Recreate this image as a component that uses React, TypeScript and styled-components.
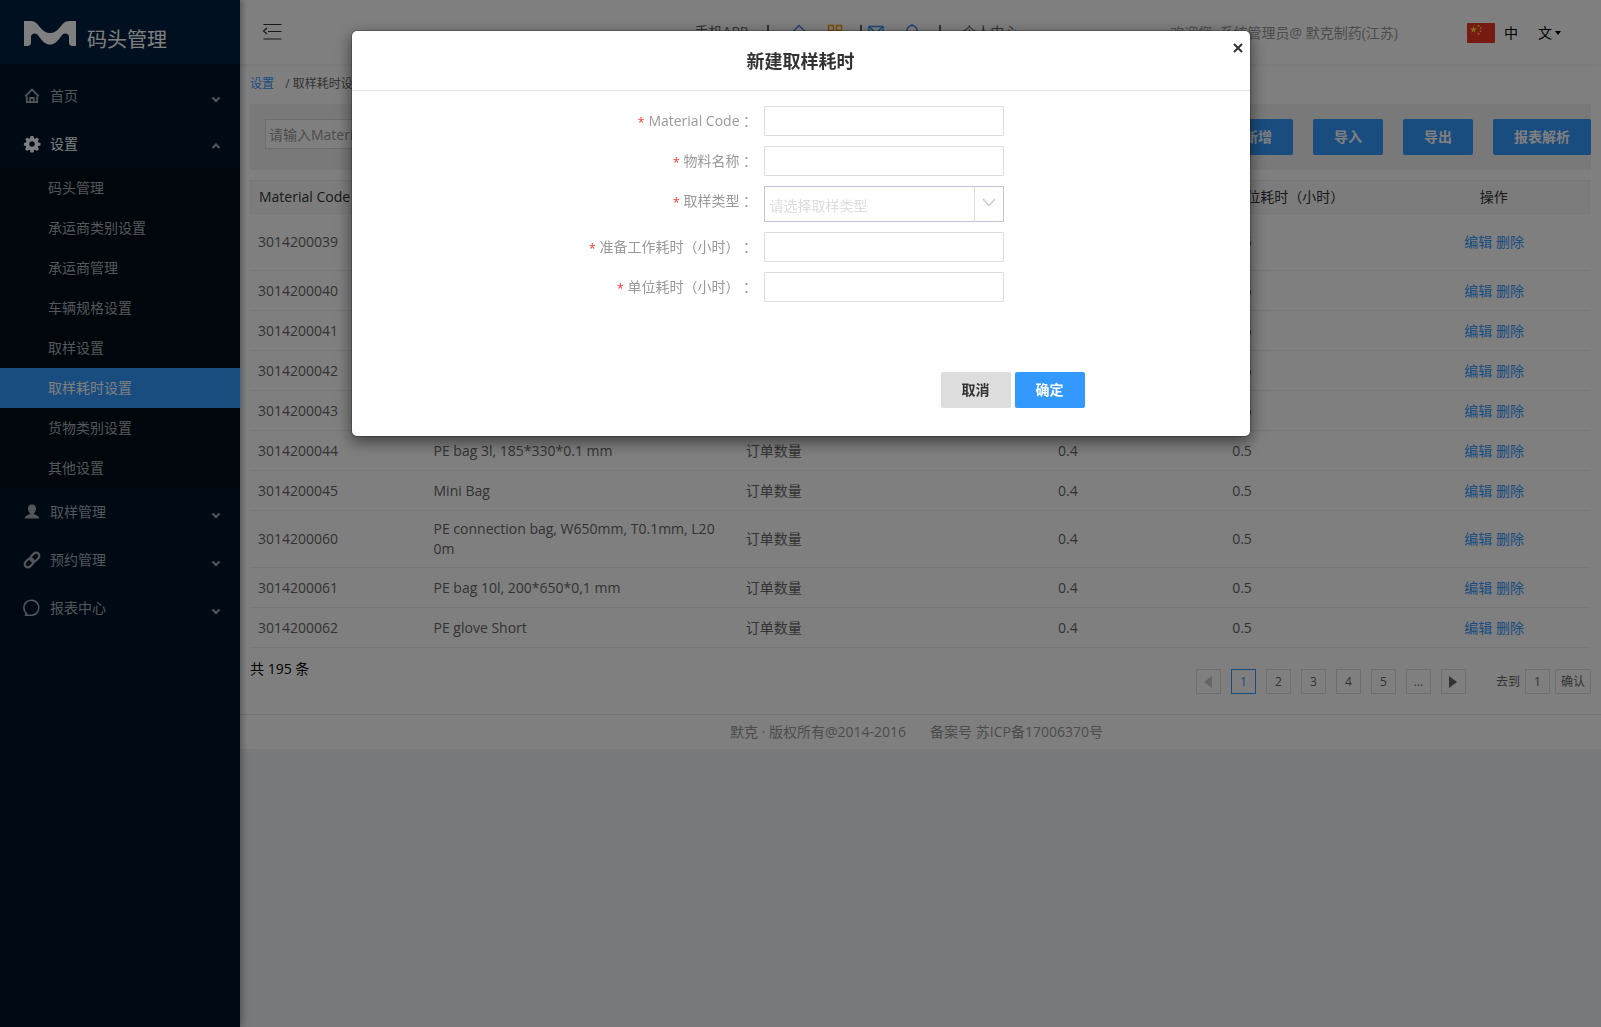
import React from 'react';
import styled, { createGlobalStyle } from 'styled-components';

const GlobalStyle = createGlobalStyle`
  *, *::before, *::after { box-sizing: border-box; }
  body {
    margin: 0;
    background: #f0f2f5;
    color: #333;
    font: 14px/20px "Open Sans", "Noto Sans CJK SC", sans-serif;
    text-spacing-trim: space-all;
  }
  button, input, select { font: inherit; margin: 0; }
  a { text-decoration: none; }
  ul { list-style: none; margin: 0; padding: 0; }
  h1, h2, p { margin: 0; }
`;

const Page = styled.div`
  display: flex;
  min-height: 100vh;
`;

const Sidebar = styled.aside`
  flex: 0 0 240px;
  position: relative;
  z-index: 1;
  background: #001529;
  box-shadow: 2px 0 6px rgba(0, 21, 41, 0.35);
`;

const Brand = styled.div`
  display: flex;
  align-items: center;
  gap: 11px;
  height: 64px;
  padding: 3px 24px 0;
  background: #002140;
  color: #fff;
`;

const BrandName = styled.h1`
  padding-top: 12px;
  font-size: 20px;
  line-height: 28px;
  font-weight: 400;
`;

const MenuRow = styled.button<{ $open?: boolean }>`
  display: flex;
  align-items: center;
  gap: 10px;
  width: 100%;
  height: 48px;
  padding: 0 18px 0 24px;
  border: 0;
  background: none;
  color: ${(p) => (p.$open ? '#fff' : '#a6adb4')};
  text-align: left;
  svg { display: block; }
`;

const MenuLabel = styled.span`
  flex: 1;
`;

const Menu = styled.nav`
  padding-top: 8px;
`;

const SubMenu = styled.ul`
  background: #000c17;
`;

const SubLink = styled.a<{ $active?: boolean }>`
  display: block;
  padding-left: 48px;
  line-height: 40px;
  color: ${(p) => (p.$active ? '#fff' : '#a6adb4')};
  background: ${(p) => (p.$active ? '#39f' : 'transparent')};
`;

const Main = styled.main`
  flex: 1;
  min-width: 0;
`;

const Header = styled.header`
  display: flex;
  align-items: center;
  height: 64px;
  padding: 0 40px 0 22px;
  background: #fff;
  box-shadow: 0 1px 4px rgba(0, 21, 41, 0.08);
  position: relative;
`;

const IconButton = styled.button`
  display: flex;
  padding: 0;
  border: 0;
  background: none;
  color: #333;
`;

const HeaderNav = styled.nav`
  display: flex;
  align-items: center;
  margin-left: auto;
  margin-right: 152px;
  a { display: flex; color: #666; }
`;

const Divider = styled.span<{ $wide?: boolean }>`
  width: 2px;
  height: 14px;
  margin: 0 ${(p) => (p.$wide ? '21px 0 19px' : '5px 0 17px')};
  background: #666;
`;

const IconPair = styled.span`
  display: flex;
  gap: 20px;
  margin-left: 1px;
`;

const Welcome = styled.p`
  padding-top: 2px;
  color: #999;
  margin-right: 69px;
`;

const LangButton = styled.button`
  display: flex;
  align-items: center;
  padding: 2px 0 0;
  border: 0;
  background: none;
  color: #000;
`;

const LangText = styled.span`
  margin: 0 20px 0 9px;
`;

const Caret = styled.span`
  margin-left: 3px;
  border: 3px solid transparent;
  border-top: 4px solid #000;
  border-bottom: 0;
`;

const Content = styled.section`
  padding: 10px 10px 20px;
  background: #fff;
`;

const Breadcrumb = styled.nav`
  height: 30px;
  font-size: 12px;
  line-height: 20px;
  color: #666;
  a { color: #39f; margin-right: 8px; }
`;

const Toolbar = styled.div`
  display: flex;
  gap: 20px;
  margin-bottom: 10px;
  padding: 15px 0 15px 15px;
  background: #f2f2f2;
`;

const SearchInput = styled.input`
  width: 180px;
  height: 30px;
  margin-right: auto;
  padding: 0 3px;
  border: 1px solid #ddd;
  background: #fff;
  &::placeholder { color: #999; }
`;

const Button = styled.button<{ $plain?: boolean }>`
  height: 36px;
  padding: 0 21px;
  border: 0;
  border-radius: 2px;
  font-weight: 700;
  background: ${(p) => (p.$plain ? '#ddd' : '#39f')};
  color: ${(p) => (p.$plain ? '#333' : '#fff')};
`;

const Table = styled.table`
  width: calc(100% - 1px);
  table-layout: fixed;
  border-collapse: separate;
  border-spacing: 0;
  th, td {
    padding: 0 8px;
    text-align: left;
    vertical-align: middle;
    border-bottom: 1px solid #eee;
  }
  th {
    height: 34px;
    font-weight: 400;
    color: #333;
    background: #f8f8f8;
    border-top: 1px solid #eee;
  }
  th:first-child { border-left: 1px solid #eee; }
  th:last-child { border-right: 1px solid #eee; }
  td { height: 40px; padding: 8px 18px 8px 8px; word-break: break-all; color: #666; }
  th:last-child, td:last-child { padding: 0 8px; text-align: center; }
  a { color: #39f; }
`;

const Col = styled.col<{ $share: number }>`
  width: ${(p) => p.$share}%;
`;

const TableFoot = styled.div`
  display: flex;
  justify-content: space-between;
  align-items: flex-start;
  padding-top: 11px;
  color: #000;
`;

const Pager = styled.div`
  display: flex;
  gap: 10px;
  padding-top: 10px;
  font-size: 12px;
  color: #666;
`;

const PageButton = styled.button<{ $active?: boolean }>`
  display: flex;
  align-items: center;
  justify-content: center;
  width: 25px;
  height: 25px;
  padding: 0;
  border: 1px solid ${(p) => (p.$active ? '#39f' : '#ddd')};
  background: #fff;
  color: ${(p) => (p.$active ? '#39f' : '#666')};
`;

const GoTo = styled.div`
  display: flex;
  align-items: center;
  gap: 5px;
  margin-left: 20px;
`;

const GoInput = styled.input`
  width: 25px;
  height: 25px;
  padding: 0;
  border: 1px solid #ddd;
  color: #666;
  text-align: center;
`;

const GoButton = styled.button`
  height: 25px;
  padding: 0 5px;
  border: 1px solid #ddd;
  border-radius: 2px;
  background: #fff;
  color: #666;
`;

const Footer = styled.footer`
  display: flex;
  justify-content: center;
  gap: 24px;
  padding: 7px 8px 7px 0;
  border-top: 1px solid #e8e8e8;
  background: #fff;
  color: #999;
`;

const Backdrop = styled.div`
  position: fixed;
  inset: 0;
  z-index: 10;
  display: flex;
  justify-content: center;
  align-items: flex-start;
  padding-top: 30px;
  background: rgba(0, 0, 0, 0.5);
`;

const Dialog = styled.section`
  position: relative;
  width: 900px;
  border: 1px solid rgba(0, 0, 0, 0.2);
  border-radius: 6px;
  background: #fff;
  background-clip: padding-box;
  box-shadow: 0 5px 15px rgba(0, 0, 0, 0.5);
`;

const DialogTitle = styled.h2`
  padding: 18px 15px 16px;
  border-bottom: 1px solid #e5e5e5;
  font-size: 18px;
  line-height: 25px;
  font-weight: 700;
  text-align: center;
`;

const CloseButton = styled.button`
  position: absolute;
  top: 12px;
  right: 7px;
  display: flex;
  padding: 0;
  border: 0;
  background: none;
  color: #333;
`;

const Form = styled.form`
  display: grid;
  gap: 10px;
  padding: 15px 0 28px;
`;

const Field = styled.div`
  display: grid;
  grid-template-columns: 402px 240px;
  gap: 10px;
  align-items: start;
`;

const Label = styled.label`
  display: flex;
  justify-content: flex-end;
  height: 30px;
  line-height: 30px;
  color: #999;
`;

const Star = styled.span`
  padding-top: 2px;
  margin-right: 4px;
  font-size: 12px;
  color: #f33;
`;

const Colon = styled.span`
  font-family: "Noto Sans CJK TC", sans-serif;
`;

const TextInput = styled.input`
  width: 100%;
  height: 30px;
  padding: 0 6px;
  border: 1px solid #ddd;
`;

const SelectBox = styled.div`
  display: flex;
  height: 36px;
  position: relative;
`;

const Select = styled.select`
  flex: 1;
  appearance: none;
  padding: 3px 36px 0 5px;
  border: 1px solid #c0c4d6;
  background: #fff;
  color: #ddd;
`;

const Arrow = styled.span`
  position: absolute;
  inset: 1px 1px 0 auto;
  display: flex;
  width: 29px;
  padding-top: 11px;
  justify-content: center;
  border-left: 1px solid #ddd;
  pointer-events: none;
`;

const Actions = styled.div`
  display: flex;
  justify-content: flex-end;
  gap: 4px;
  padding: 60px 165px 0 0;
`;

const icons: Record<string, React.ReactNode> = {
  home: (
    <g fill="none" stroke="currentColor" strokeWidth="1.800">
      <path d="M1.200 8.300 8 1.600l6.800 6.700" />
      <path d="M2.800 8.500v5.700h10.400V8.500M6.200 14v-4h3.600v4" />
    </g>
  ),
  gear: (
    <path
      fill="currentColor"
      fillRule="evenodd"
      d="M6.500 0h3l.4 2.200 1.200.5 1.900-1.300 2 2-1.200 1.900.5 1.200 2.200.4v2.600l-2.200.4-.5 1.200 1.200 1.900-2 2-1.900-1.200-1.200.5-.4 2.200h-3l-.4-2.200-1.200-.5-1.900 1.200-2-2 1.200-1.900-.5-1.200L-.1 9.500V6.900l2.100-.4.5-1.200L1.300 3.400l2-2 1.600 1.300 1.200-.5zM8 5.300a2.700 2.700 0 1 0 0 5.400 2.700 2.700 0 0 0 0-5.400z"
    />
  ),
  user: (
    <path
      fill="currentColor"
      d="M8 .5c2.600 0 4 1.500 4 4.200 0 1.800-.8 3.400-1.900 4.300v1.200c1.800.7 5 1.500 5.200 4.300H.7c.2-2.800 3.400-3.600 5.200-4.300V9C4.800 8.100 4 6.500 4 4.700 4 2 5.400.5 8 .5z"
    />
  ),
  link: (
    <g fill="none" stroke="currentColor" strokeWidth="2.200" transform="rotate(-45 8 8)">
      <rect x="-1" y="4.800" width="10" height="6.400" rx="3.200" />
      <rect x="7" y="4.800" width="10" height="6.400" rx="3.200" />
    </g>
  ),
  chat: (
    <path
      fill="none"
      stroke="currentColor"
      strokeWidth="1.500"
      d="M.8 15.200c1-.2 1.600-.8 1.900-1.600A7.500 7.500 0 1 1 8.300 15.200z"
    />
  ),
};

const Icon = ({ name }: { name: string }) => (
  <svg width="16" height="16" viewBox="0 0 16 16" overflow="visible" aria-hidden="true">
    {icons[name]}
  </svg>
);

const Chevron = ({ up }: { up?: boolean }) => (
  <svg width="12" height="16" viewBox="0 0 12 16" aria-hidden="true">
    <path d={up ? 'M2.500 12 6 8.500 9.500 12' : 'M2.500 9.500 6 13 9.500 9.500'} fill="none" stroke="#a6adb4" strokeWidth="2" />
  </svg>
);

const subItems = ['码头管理', '承运商类别设置', '承运商管理', '车辆规格设置', '取样设置', '取样耗时设置', '货物类别设置', '其他设置'];

const menu = [
  { icon: 'home', label: '首页' },
  { icon: 'gear', label: '设置', children: subItems },
  { icon: 'user', label: '取样管理' },
  { icon: 'link', label: '预约管理' },
  { icon: 'chat', label: '报表中心' },
];

const rows = [
  ['3014200039', 'PE connection bag, W650mm, T0.1mm, L100m'],
  ['3014200040', 'PE bag 1l'],
  ['3014200041', 'PE bag 2l'],
  ['3014200042', 'PE bag 5l'],
  ['3014200043', 'PE bag 8l'],
  ['3014200044', 'PE bag 3l, 185*330*0.1 mm'],
  ['3014200045', 'Mini Bag'],
  ['3014200060', 'PE connection bag, W650mm, T0.1mm, L200m'],
  ['3014200061', 'PE bag 10l, 200*650*0,1 mm'],
  ['3014200062', 'PE glove Short'],
];

const shares = [13.1, 23.3, 23.3, 13, 13, 14.3];
const headings = ['Material Code', '物料名称', '取样类型', '准备工作耗时（小时）', '单位耗时（小时）', '操作'];

const FieldLabel = ({ id, text }: { id: string; text: string }) => (
  <Label htmlFor={id}>
    <Star>*</Star>
    <span>{text}</span>
    <Colon>：</Colon>
  </Label>
);

const TextField = ({ id, text }: { id: string; text: string }) => (
  <Field>
    <FieldLabel id={id} text={text} />
    <TextInput id={id} type="text" />
  </Field>
);

export default function App() {
  return (
    <>
      <GlobalStyle />
      <Page>
        <Sidebar>
          <Brand>
            <svg width="52" height="26" viewBox="0 0 52 26" aria-hidden="true">
              <path
                fill="#fff"
                d="M0 0h7c4 0 6.500 3 9 6.200C19 10 22 12 26 12s7-2 10-5.800C38.500 3 41 0 45 0h7v25h-3.500c-2.200 0-3.500-1.300-3.500-3.500V16c0-2-1.600-3.500-3.600-3.500-1.600 0-2.800.8-4 2.400C34.500 19 31 23.500 26 23.500S17.500 19 14.600 14.900c-1.200-1.600-2.400-2.400-4-2.400C8.600 12.500 7 14 7 16v5.500C7 23.700 5.700 25 3.500 25H0z"
              />
            </svg>
            <BrandName>码头管理</BrandName>
          </Brand>
          <Menu>
            {menu.map((m) => (
              <React.Fragment key={m.label}>
                <MenuRow type="button" $open={!!m.children}>
                  <Icon name={m.icon} />
                  <MenuLabel>{m.label}</MenuLabel>
                  <Chevron up={!!m.children} />
                </MenuRow>
                {m.children && (
                  <SubMenu>
                    {m.children.map((c) => (
                      <li key={c}>
                        <SubLink href="#" $active={c === '取样耗时设置'}>{c}</SubLink>
                      </li>
                    ))}
                  </SubMenu>
                )}
              </React.Fragment>
            ))}
          </Menu>
        </Sidebar>

        <Main>
          <Header>
            <IconButton type="button" aria-label="收起菜单">
              <svg width="20" height="18" viewBox="0 0 20 18" fill="none" stroke="currentColor" strokeWidth="1.200">
                <path d="M1.500 1.500h18M6 8.500h13.500M1.500 16h18M5 5 1.500 8 5 11" />
              </svg>
            </IconButton>
            <HeaderNav>
              <a href="#">手机APP</a>
              <Divider $wide />
              <IconPair>
                <a href="#" aria-label="主页">
                  <svg width="16" height="16" viewBox="0 0 16 16" fill="none" stroke="#4a86e8" strokeWidth="1.500">
                    <path d="M1 8.500 8 1.500l7 7M3 8v7h10V8" />
                  </svg>
                </a>
                <a href="#" aria-label="应用">
                  <svg width="16" height="16" viewBox="0 0 16 16" fill="none" stroke="#f90" strokeWidth="1.500">
                    <path d="M1.500 1.500h5v5h-5zM9.500 1.500h5v5h-5zM1.500 9.500h5v5h-5zM9.500 9.500h5v5h-5z" />
                  </svg>
                </a>
              </IconPair>
              <Divider />
              <IconPair>
                <a href="#" aria-label="消息">
                  <svg width="16" height="16" viewBox="0 0 16 16" fill="none" stroke="#39f" strokeWidth="1.500">
                    <path d="M1 2.500h14v12H1zM1.500 3 8 9l6.500-6" />
                  </svg>
                </a>
                <a href="#" aria-label="通知">
                  <svg width="16" height="16" viewBox="0 0 16 16" fill="none" stroke="#4a86e8" strokeWidth="1.500">
                    <path d="M8 0v1.500M3 12.500V6.500a5 5 0 0 1 10 0v6M1 12.500h14M6.500 15h3" />
                  </svg>
                </a>
              </IconPair>
              <Divider $wide />
              <a href="#">个人中心</a>
            </HeaderNav>
            <Welcome>欢迎您, 系统管理员@ 默克制药(江苏)</Welcome>
            <LangButton type="button">
              <svg width="28" height="20" viewBox="0 0 28 20" aria-hidden="true">
                <rect width="28" height="20" rx="1" fill="#ee3524" />
                <path fill="#fd3" d="m6.500 3 .9 2.600h2.700L7.900 7.200l.8 2.600-2.200-1.600-2.200 1.600.8-2.600-2.200-1.600h2.700zM10.500 2h2v1.500h-2zM12.800 4.500h1.500V6h-1.500zM12.800 7.500h1.500V9h-1.500zM10.500 10h2v1.500h-2z" />
              </svg>
              <LangText>中</LangText>
              文
              <Caret />
            </LangButton>
          </Header>

          <Content>
            <Breadcrumb>
              <a href="#">设置</a> / 取样耗时设置
            </Breadcrumb>
            <Toolbar>
              <SearchInput type="text" placeholder="请输入Material Code" aria-label="Material Code" />
              <Button type="button">新增</Button>
              <Button type="button">导入</Button>
              <Button type="button">导出</Button>
              <Button type="button">报表解析</Button>
            </Toolbar>
            <Table>
              <colgroup>
                {shares.map((s, i) => (
                  <Col key={i} $share={s} />
                ))}
              </colgroup>
              <thead>
                <tr>
                  {headings.map((h) => (
                    <th key={h}>{h}</th>
                  ))}
                </tr>
              </thead>
              <tbody>
                {rows.map(([code, name]) => (
                  <tr key={code}>
                    <td>{code}</td>
                    <td>{name}</td>
                    <td>订单数量</td>
                    <td>0.4</td>
                    <td>0.5</td>
                    <td>
                      <a href="#">编辑</a> <a href="#">删除</a>
                    </td>
                  </tr>
                ))}
              </tbody>
            </Table>
            <TableFoot>
              <span>共 195 条</span>
              <Pager>
                <PageButton type="button" aria-label="上一页">
                  <svg width="8" height="12" viewBox="0 0 8 12"><path d="M8 0v12L0 6z" fill="#ccc" /></svg>
                </PageButton>
                {['1', '2', '3', '4', '5', '...'].map((n) => (
                  <PageButton key={n} type="button" $active={n === '1'}>{n}</PageButton>
                ))}
                <PageButton type="button" aria-label="下一页">
                  <svg width="8" height="12" viewBox="0 0 8 12"><path d="M0 0v12l8-6z" fill="#666" /></svg>
                </PageButton>
                <GoTo>
                  <label htmlFor="goto">去到</label>
                  <GoInput id="goto" type="text" defaultValue="1" />
                  <GoButton type="button">确认</GoButton>
                </GoTo>
              </Pager>
            </TableFoot>
          </Content>
          <Footer>
            <span>默克 · 版权所有@2014-2016</span>
            <span>备案号 苏ICP备17006370号</span>
          </Footer>
        </Main>
      </Page>

      <Backdrop>
        <Dialog role="dialog" aria-labelledby="dialog-title">
          <DialogTitle id="dialog-title">新建取样耗时</DialogTitle>
          <CloseButton type="button" aria-label="关闭">
            <svg width="10" height="10" viewBox="0 0 10 10" stroke="currentColor" strokeWidth="2">
              <path d="m1 1 8 8M9 1 1 9" />
            </svg>
          </CloseButton>
          <Form>
            <TextField id="code" text="Material Code" />
            <TextField id="name" text="物料名称" />
            <Field>
              <FieldLabel id="type" text="取样类型" />
              <SelectBox>
                <Select id="type" defaultValue="">
                  <option value="">请选择取样类型</option>
                  <option value="order">订单数量</option>
                </Select>
                <Arrow>
                  <svg width="14" height="9" viewBox="0 0 14 9" fill="none" stroke="#ccc" strokeWidth="1.500">
                    <path d="m1 1 6 6.500L13 1" />
                  </svg>
                </Arrow>
              </SelectBox>
            </Field>
            <TextField id="prep" text="准备工作耗时（小时）" />
            <TextField id="unit" text="单位耗时（小时）" />
            <Actions>
              <Button type="button" $plain>取消</Button>
              <Button type="submit">确定</Button>
            </Actions>
          </Form>
        </Dialog>
      </Backdrop>
    </>
  );
}
